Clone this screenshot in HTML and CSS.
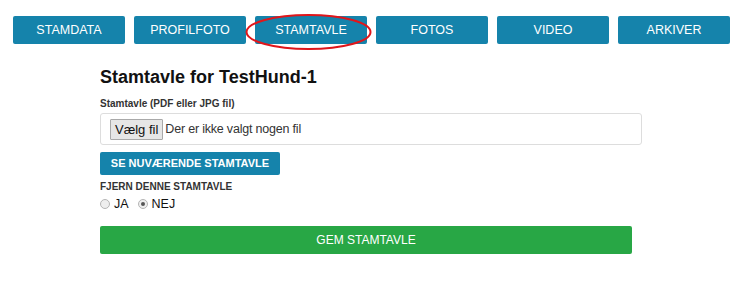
FILE: index.html
```html
<!DOCTYPE html>
<html lang="da">
  <head>
    <meta charset="UTF-8" />
    <meta name="viewport" content="width=device-width, initial-scale=1.0" />
    <title>Stamtavle</title>
    <link rel="stylesheet" href="styles.css">
  </head>
  <body>
    <div class="nav">
      <div class="tab">STAMDATA</div>
      <div class="tab">PROFILFOTO</div>
      <div class="tab active">
        STAMTAVLE
        <svg class="ring" width="127" height="38" viewBox="0 0 127 38">
          <ellipse cx="63.5" cy="19" rx="62" ry="17" fill="none" stroke="#e0161b" stroke-width="2" />
        </svg>
      </div>
      <div class="tab">FOTOS</div>
      <div class="tab">VIDEO</div>
      <div class="tab">ARKIVER</div>
    </div>
    <div class="form">
      <div class="heading">Stamtavle for TestHund-1</div>
      <div class="label">Stamtavle (PDF eller JPG fil)</div>
      <div class="file">
        <span class="choose">Vælg fil</span>
        <span class="none">Der er ikke valgt nogen fil</span>
      </div>
      <div class="btn-blue">SE NUVÆRENDE STAMTAVLE</div>
      <div class="label caps">FJERN DENNE STAMTAVLE</div>
      <div class="radios">
        <span class="radio"></span><span class="opt">JA</span>
        <span class="radio checked"></span><span class="opt">NEJ</span>
      </div>
      <div class="btn-green">GEM STAMTAVLE</div>
    </div>
  </body>
</html>
```

FILE: styles.css
```css
body {
  margin: 0;
  font-family: "Liberation Sans", Arial, sans-serif;
  color: #222;
  background: #fff;
}
.nav {
  display: flex;
  gap: 9px;
  padding: 16px 0 0 13px;
}
.tab {
  position: relative;
  width: 112px;
  height: 28px;
  line-height: 28px;
  text-align: center;
  background-color: #1583ab;
  color: #fff;
  font-size: 12.5px;
  border-radius: 2px;
}
.ring {
  position: absolute;
  left: -10px;
  top: -3px;
}
.form {
  width: 542px;
  margin-left: 100px;
  padding-top: 22px;
}
.heading {
  font-size: 18px;
  font-weight: bold;
  color: #111;
  line-height: 22px;
}
.label {
  font-size: 10px;
  font-weight: bold;
  color: #333;
  margin-top: 10px;
  line-height: 12px;
}
.file {
  display: flex;
  align-items: center;
  height: 30px;
  margin-top: 3px;
  border: 1px solid #ddd;
  border-radius: 3px;
  padding-left: 9px;
}
.choose {
  border: 1px solid #a9a9a9;
  background-color: #e6e6e6;
  font-size: 13px;
  padding: 1px 4px;
  height: 17px;
  line-height: 17px;
  border-radius: 1px;
  color: #111;
}
.none {
  font-size: 12.5px;
  letter-spacing: -0.2px;
  margin-left: 2px;
  color: #333;
}
.btn-blue {
  display: inline-block;
  margin-top: 7px;
  width: 180px;
  height: 23px;
  line-height: 23px;
  text-align: center;
  background-color: #1583ab;
  color: #fff;
  font-size: 11px;
  font-weight: bold;
  border-radius: 2px;
}
.caps {
  margin-top: 6px;
}
.radios {
  display: flex;
  align-items: center;
  margin-top: 4px;
  height: 14px;
}
.radio {
  width: 8px;
  height: 8px;
  border: 1px solid #b5b5b5;
  border-radius: 50%;
  background-color: #eee;
  position: relative;
}
.radio.checked::after {
  content: "";
  position: absolute;
  left: 2px;
  top: 2px;
  width: 4px;
  height: 4px;
  border-radius: 50%;
  background-color: #555;
}
.opt {
  font-size: 12.5px;
  color: #111;
  margin: 0 9px 0 4px;
}
.btn-green {
  margin-top: 15px;
  width: 532px;
  height: 28px;
  line-height: 28px;
  text-align: center;
  background-color: #28a745;
  color: #fff;
  font-size: 12px;
  border-radius: 2px;
}
```
